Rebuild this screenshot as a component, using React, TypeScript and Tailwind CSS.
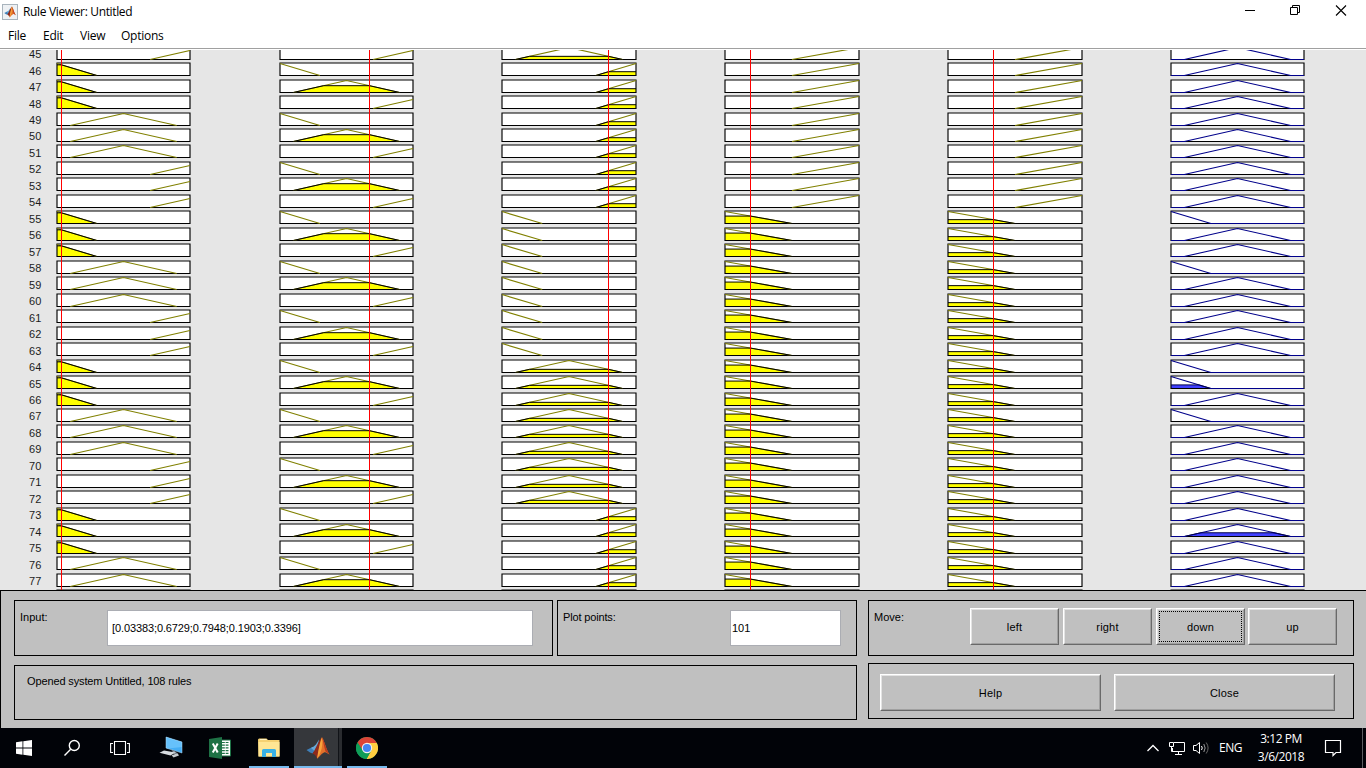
import React from "react";

type Shape = "low" | "mid" | "high";

interface Column {
  x0: number;
  x1: number;
  input?: number;
  marker?: number;
  lowEnd: number;
  highStart: number;
  highTop: number;
}

const TOP = 50;
const BOTTOM = 590;

const columns: Column[] = [
  { x0: 57, x1: 190, input: 0.03383, marker: 61, lowEnd: 0.3, highStart: 0.7, highTop: 0.75 },
  { x0: 280, x1: 413, input: 0.6729, marker: 369, lowEnd: 0.3, highStart: 0.7, highTop: 0.75 },
  { x0: 502, x1: 636, input: 0.7948, marker: 608, lowEnd: 0.3, highStart: 0.7, highTop: 1 },
  { x0: 725, x1: 859, input: 0.1903, marker: 750, lowEnd: 0.5, highStart: 0.5, highTop: 1 },
  { x0: 948, x1: 1082, input: 0.3396, marker: 993, lowEnd: 0.5, highStart: 0.5, highTop: 1 },
  { x0: 1171, x1: 1304, lowEnd: 0.3, highStart: 0.7, highTop: 1 },
];

const lowOutputs = [55, 58, 64, 65, 67];
const firedOutputs: Record<number, number> = { 65: 0.3, 74: 0.31 };
const order: Shape[] = ["low", "mid", "high"];

function shapeFor(rule: number, col: number): Shape {
  const n = rule - 1;
  if (col === 0) return order[Math.floor(n / 3) % 3];
  if (col === 1) return order[n % 3];
  if (col === 2) return order[Math.floor(n / 9) % 3];
  if (col === 5) return lowOutputs.includes(rule) ? "low" : "mid";
  return rule < 55 ? "high" : "low";
}

function profile(shape: Shape, c: Column): [number, number][] {
  if (shape === "low") return [[0, 1], [c.lowEnd, 0]];
  if (shape === "mid") return [[0.1, 0], [0.5, 1], [0.9, 0]];
  return [[c.highStart, 0], [1, c.highTop]];
}

function degree(points: [number, number][], x: number): number {
  for (let i = 1; i < points.length; i++) {
    const [xa, ya] = points[i - 1];
    const [xb, yb] = points[i];
    if (x >= xa && x <= xb) return ya + ((x - xa) / (xb - xa)) * (yb - ya);
  }
  return 0;
}

function clipped(points: [number, number][], level: number): [number, number][] {
  const out: [number, number][] = [];
  points.forEach((p, i) => {
    if (i > 0) {
      const q = points[i - 1];
      if ((q[1] - level) * (p[1] - level) < 0) {
        const t = (level - q[1]) / (p[1] - q[1]);
        out.push([q[0] + t * (p[0] - q[0]), level]);
      }
    }
    if (p[1] <= level) out.push(p);
    else if (i === 0 || i === points.length - 1) out.push([p[0], level]);
  });
  if (points[0][1] > level) out.sort((a, b) => a[0] - b[0]);
  return out;
}

function Cell({ rule, col }: { rule: number; col: number }) {
  const c = columns[col];
  const b = Math.floor(59.15 + 16.47 * (rule - 45));
  const top = b - 12;
  const base = b + 0.5;
  const px = (p: [number, number]) =>
    `${(c.x0 + p[0] * (c.x1 - c.x0)).toFixed(2)},${(base - p[1] * (base - top - 0.5)).toFixed(2)}`;
  const shape = shapeFor(rule, col);
  const points = profile(shape, c);
  const level = c.input !== undefined ? degree(points, c.input) : firedOutputs[rule] ?? 0;
  const cut = level > 0 ? clipped(points, level) : [];
  const isOutput = col === 5;
  const ink = isOutput ? "#00008b" : "#808000";
  const fillPts = cut.length
    ? [[cut[0][0], 0] as [number, number], ...cut, [cut[cut.length - 1][0], 0] as [number, number]].map(px).join(" ")
    : "";
  return (
    <g>
      <rect x={c.x0} y={top} width={c.x1 - c.x0} height={b + 0.5 - top} fill="#fff" />
      {cut.length > 0 && <polygon points={fillPts} fill={isOutput ? "#4040ff" : "#ffff00"} />}
      <path d={`M${c.x0} ${b + 1}V${top}H${c.x1}V${b + 1}`} fill="none" stroke="#000" strokeWidth="1.15" />
      <path d={`M${c.x0} ${base}H${c.x1}`} stroke="#000" />
      <polyline points={points.map(px).join(" ")} fill="none" stroke={ink} strokeWidth="1.15" />
      {cut.length > 0 && <polyline points={cut.map(px).join(" ")} fill="none" stroke={isOutput ? "#00004c" : "#000"} />}
      {isOutput && (
        <path
          d={
            shape === "low"
              ? `M${c.x0 + 39} ${base}H${c.x1}`
              : `M${c.x0} ${base}h15M${c.x1 - 15} ${base}H${c.x1}`
          }
          stroke="#00008b"
        />
      )}
    </g>
  );
}

function RulePlot() {
  const rules = Array.from({ length: 34 }, (_, i) => 45 + i);
  return (
    <svg className="block h-[540px] w-[1366px] bg-[#e6e6e6]" viewBox="0 50 1366 540">
      {rules.map((r) => (
        <g key={r}>
          {r < 78 && (
            <text x="41.3" y={Math.round(58.1 + 16.47 * (r - 45))} textAnchor="end" fontSize="11" fill="#1c1c1c" fontFamily="Liberation Sans, sans-serif">
              {r}
            </text>
          )}
          {columns.map((_, i) => (
            <Cell key={i} rule={r} col={i} />
          ))}
        </g>
      ))}
      {columns.map((c, i) =>
        c.marker === undefined ? null : (
          <path key={i} d={`M${c.marker + 0.5} ${TOP}V${BOTTOM}`} stroke="#ff0000" />
        ),
      )}
    </svg>
  );
}

function MatlabIcon({ size }: { size: number }) {
  return (
    <svg width={size} height={size} viewBox="0 0 24 24">
      <path d="M0.5 14 6.5 11 10 13 6.5 17.5 4 16.5Z" fill="#3f7fb8" />
      <path d="M6.5 11C9 10.5 11 7 13 3.5L12 9 8.5 15 5 12Z" fill="#67a9d8" />
      <path d="M6.5 17.5C9 15 12 5 16 1.2 14.500 8 14 16 11 22.500 10 20 9 18 6.500 17.500Z" fill="#8e2a1c" />
      <path d="M16 1.200C18.500 5 20 13 23.500 18.500 21 17 19.500 15.500 18 16.500 15 18 13.500 21 11 22.800 13 16 14 7 16 1.200Z" fill="#e2702a" />
      <path d="M16 1.200C16.800 6 16.500 13 13 19.500L11 22.800C12 16 13.500 7 16 1.200Z" fill="#f6a23b" />
      <path d="M16 1.200C18.500 5 20 13 23.500 18.500L19.500 15.500C18 11 17.500 6 16 1.200Z" fill="#b93a20" />
    </svg>
  );
}

function PushButton({ label, wide, focused }: { label: string; wide?: boolean; focused?: boolean }) {
  return (
    <button
      className={`h-[37px] border border-t-white border-l-white border-r-[#696969] border-b-[#696969] bg-[#c0c0c0] ${wide ? "w-[221px]" : "w-[89px]"}`}
    >
      <span className="flex h-full w-full border border-t-[#e3e3e3] border-l-[#e3e3e3] border-r-[#a0a0a0] border-b-[#a0a0a0] p-px">
        <span
          className={`flex h-full w-full items-center justify-center pt-px tracking-[0.2px] ${focused ? "border border-dotted border-black" : "border border-transparent"}`}
        >
          {label}
        </span>
      </span>
    </button>
  );
}

function Controls() {
  return (
    <section className="flex h-[138px] gap-[11px] border-t border-l border-black bg-[#c0c0c0] pt-[9px] pl-[13px] font-['Liberation_Sans',Arial,sans-serif] text-[11px] leading-[13px] text-black">
      <div className="flex w-[843px] flex-col gap-[9px]">
        <div className="flex gap-1">
          <div className="flex h-14 w-[539px] border border-black pl-[5px]">
            <label className="w-[87px] pt-[10px]">Input:</label>
            <div className="mt-[9px] flex h-9 w-[426px] items-center border border-[#abadb3] bg-white pl-1 tracking-[-0.11px]">
              [0.03383;0.6729;0.7948;0.1903;0.3396]
            </div>
          </div>
          <div className="flex h-14 w-[300px] border border-black pl-[5px]">
            <label className="w-[167px] pt-[10px] tracking-[-0.15px]">Plot points:</label>
            <div className="mt-[9px] flex h-9 w-[111px] items-center border border-[#abadb3] bg-white pl-px">101</div>
          </div>
        </div>
        <div className="h-[55px] border border-black pt-[9px] pl-3 tracking-[-0.13px]">Opened system Untitled, 108 rules</div>
      </div>
      <div className="flex w-[486px] flex-col gap-[7px]">
        <div className="flex h-14 border border-black pl-[5px]">
          <span className="w-24 pt-[10px]">Move:</span>
          <div className="flex gap-1 pt-[7px]">
            <PushButton label="left" />
            <PushButton label="right" />
            <PushButton label="down" focused />
            <div className="-ml-px flex">
              <PushButton label="up" />
            </div>
          </div>
        </div>
        <div className="flex h-14 gap-[13px] border border-black pt-[10px] pl-[11px]">
          <PushButton label="Help" wide />
          <PushButton label="Close" wide />
        </div>
      </div>
    </section>
  );
}

function TitleBar() {
  return (
    <header className="h-[50px] bg-white font-['Open_Sans','Noto_Sans',sans-serif] text-[12px] text-black">
      <div className="flex h-6 items-center">
        <span className="ml-[2px] flex h-4 w-4 items-center justify-center border border-[#a9b4bd] bg-[#eef1f4]">
          <MatlabIcon size={12} />
        </span>
        <span className="ml-[5px] tracking-[-0.35px]">Rule Viewer: Untitled</span>
        <svg className="mb-1 ml-auto" width="122" height="20" viewBox="1244 0 122 20" fill="none" stroke="#000">
          <path d="M1245 10.500H1255" />
          <path d="M1290.500 7.500H1297.500V14.500H1290.500ZM1292.500 7V5.500H1299.500V12.500H1298" />
          <path d="M1336 5.500 1346 15.500M1346 5.500 1336 15.500" strokeWidth="1.100" />
        </svg>
      </div>
      <nav className="flex h-6 items-center pl-2 tracking-[-0.25px]">
        <span className="w-[35px]">File</span>
        <span className="w-[37px]">Edit</span>
        <span className="w-[41px]">View</span>
        <span>Options</span>
      </nav>
      <div className="h-px bg-[#a0a0a0]" />
    </header>
  );
}

function Taskbar() {
  return (
    <footer className="flex h-10 bg-[#010308] font-['Open_Sans','Noto_Sans',sans-serif] text-[12px] text-white">
      <div className="flex w-12 items-center justify-center">
        <svg width="16" height="16" viewBox="0 0 16 16" fill="#fff">
          <path d="M0 2.200 6.500 1.300V7.500H0ZM7.300 1.200 16 0V7.500H7.300ZM0 8.400H6.500V14.700L0 13.800ZM7.300 8.400H16V16L7.300 14.800Z" />
        </svg>
      </div>
      <div className="flex w-12 items-center justify-center">
        <svg width="18" height="18" viewBox="0 0 18 18" fill="none" stroke="#fff" strokeWidth="1.400">
          <circle cx="11.300" cy="6.500" r="5" />
          <path d="M7.700 10.200 1.500 16.400" />
        </svg>
      </div>
      <div className="flex w-12 items-center justify-center">
        <svg width="20" height="16" viewBox="0 0 20 16" fill="none" stroke="#fff" strokeWidth="1.100">
          <path d="M4.500 1.500H15.500V14.500H4.500ZM3 3.500H.6V12.500H3M17 3.500H19.400V12.500H17" />
        </svg>
      </div>
      <div className="flex w-[54px] items-center justify-center">
        <svg width="24" height="24" viewBox="0 0 24 24">
          <path d="M7 1 23 6V17L7 12Z" fill="#45aef5" />
          <path d="M7 1 23 6V11L9 12.500 7 12Z" fill="#66c1fb" />
          <path d="M7 1 23 6V17L7 12Z" fill="none" stroke="#b7dcf5" strokeWidth=".5" />
          <path d="M12.500 14 16 15.300 18.500 17.500 15 18Z" fill="#8e979f" />
          <path d="M5 14.500 16.500 16.500 11.500 19.500.500 16.800Z" fill="#d7dce0" />
          <path d="M12.500 19.200 18.500 17.300 20 19.500 14.500 21.500Z" fill="#c4c9cd" />
        </svg>
      </div>
      <div className="flex w-11 items-center justify-center">
        <svg width="22" height="22" viewBox="0 0 22 22">
          <path d="M11 3H21.500V19H11Z" fill="#fff" stroke="#1e7145" />
          <path d="M13 5.500H19.500M13 8.200H19.500M13 10.900H19.500M13 13.600H19.500M13 16.300H19.500" stroke="#1e7145" strokeWidth="1.200" />
          <path d="M16.300 4V18" stroke="#fff" strokeWidth=".8" />
          <path d="M0 2 13 0V22L0 20Z" fill="#1e7145" />
          <path d="M3.800 6.500 8.700 15.500M8.700 6.500 3.800 15.500" stroke="#fff" strokeWidth="2" />
        </svg>
      </div>
      <div className="ml-[7px] flex w-10 items-center justify-center border-b-2 border-[#76b9ed] pt-[2px]">
        <svg width="22" height="20" viewBox="0 0 22 20">
          <path d="M0 1.500 1 .5H8.500L10 2H21.500V18.500H.5Z" fill="#f5d172" />
          <path d="M.5 4H21.500V18.500H.5Z" fill="#ffe694" />
          <path d="M2 1.500H8.500" stroke="#fff3c4" />
          <path d="M4 19V12.500Q4 11 5.500 11H16.500Q18 11 18 12.500V19H14V15H8V19Z" fill="#38b0e5" />
        </svg>
      </div>
      <div className="ml-[5px] flex w-12 border-b-2 border-[#76b9ed]">
        <div className="flex w-11 items-center justify-center bg-[#35373b] pl-1 pt-[2px]">
          <MatlabIcon size={24} />
        </div>
        <div className="w-1 border-l border-[#111318] bg-[#292b2f]" />
      </div>
      <div className="ml-[5px] flex w-10 items-center justify-center border-b-2 border-[#76b9ed] pt-[2px]">
        <svg width="22" height="22" viewBox="0 0 22 22">
          <circle cx="11" cy="11" r="11" fill="#0f9d58" />
          <path d="M1.470 5.500A11 11 0 0 1 20.530 5.500L20.600 6H11L6.700 13.500Z" fill="#db4437" />
          <path d="M20.530 5.500A11 11 0 0 1 10.500 22L15.500 13 11 6H20.700Z" fill="#ffcd40" />
          <path d="M1.470 5.500A11 11 0 0 0 10.500 22L15.300 13.500 6.700 13.500Z" fill="#0f9d58" />
          <circle cx="11" cy="11" r="5.200" fill="#f1f1f1" />
          <circle cx="11" cy="11" r="4.100" fill="#4285f4" />
        </svg>
      </div>
      <div className="ml-auto flex items-center">
        <svg width="66" height="20" viewBox="0 0 66 20" fill="none" stroke="#fff">
          <path d="M1.500 13 7 7.500 12.500 13" strokeWidth="1.300" />
          <path d="M28 4.500H38.500V13.500H26.500V10M23.500 4.500H27.500V8.500H23.500ZM25.500 8.500V13.500H27M32.500 13.500V16.500M29 16.500H36" />
          <path d="M47.500 7.500H50L53.500 4.500V15.500L50 12.500H47.500Z" />
          <path d="M55.500 8Q57 10 55.500 12" />
          <path d="M57.800 6Q60.500 10 57.800 14" stroke="#999" />
          <path d="M60.200 4.500Q64 10 60.200 15.500" stroke="#666" />
        </svg>
        <span className="ml-[7px] w-[24px] tracking-[-0.5px]">ENG</span>
        <div className="ml-[2px] w-[72px] text-center leading-[18px] tracking-[-0.45px]">
          <div>3:12 PM</div>
          <div>3/6/2018</div>
        </div>
        <svg className="ml-[7px]" width="18" height="18" viewBox="0 0 18 18" fill="none" stroke="#fff" strokeWidth="1.200">
          <path d="M1.500 1.500H16.500V13.500H12L9 16.500V13.500H1.500Z" />
        </svg>
        <div className="ml-5 h-10 w-1 border-l border-[#5b5d61]" />
      </div>
    </footer>
  );
}

export default function App() {
  return (
    <main className="flex h-[768px] w-[1366px] flex-col overflow-hidden bg-white">
      <TitleBar />
      <RulePlot />
      <Controls />
      <Taskbar />
    </main>
  );
}
